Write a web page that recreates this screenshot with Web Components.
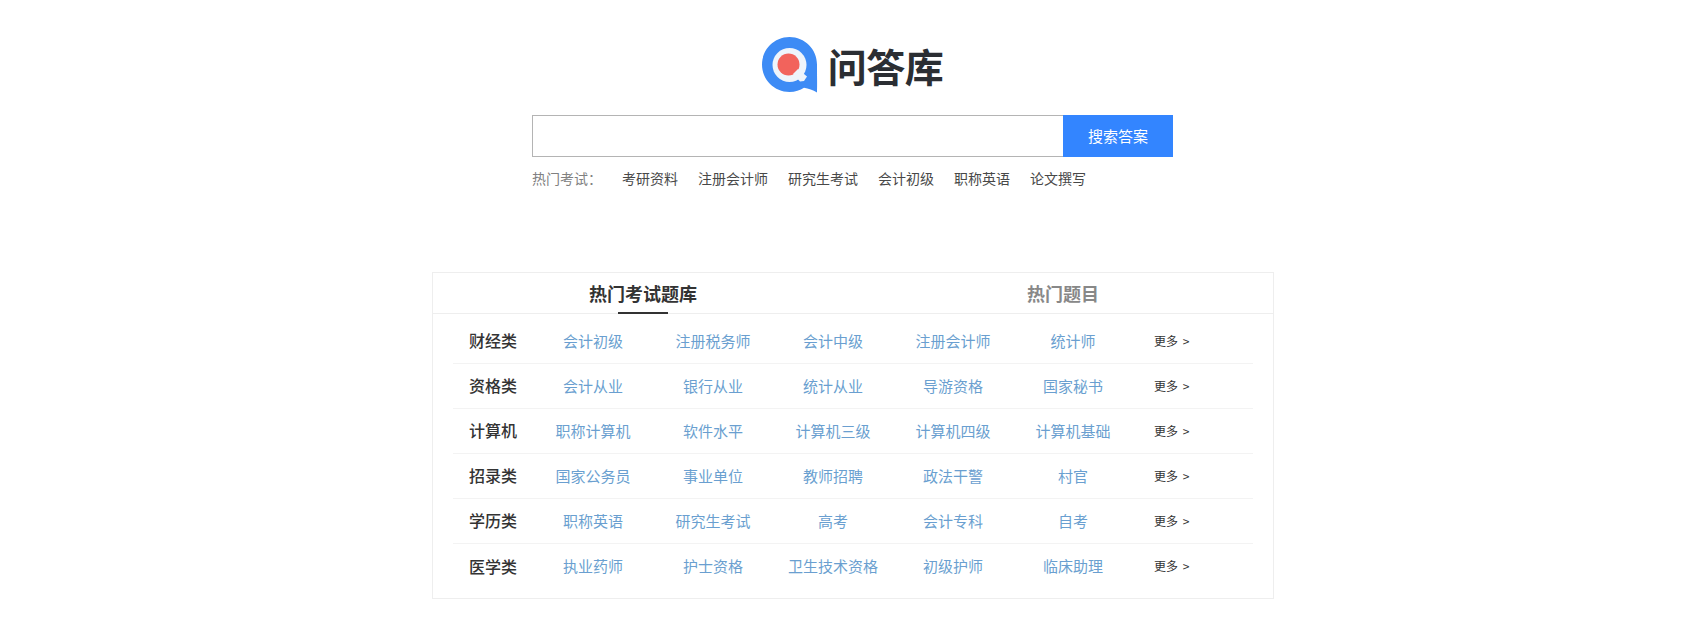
<!DOCTYPE html>
<html lang="zh-CN">
<head>
<meta charset="utf-8">
<title>问答库</title>
<style>
	html, body { margin: 0; background: #fff; }
	body { font-family: "Noto Sans CJK SC", "Liberation Sans", sans-serif; color: #333; }
</style>
</head>
<body>
<qa-page>
	<qa-logo></qa-logo>
	<qa-search></qa-search>
	<qa-hot label="热门考试：" items="考研资料,注册会计师,研究生考试,会计初级,职称英语,论文撰写"></qa-hot>
	<qa-panel first="热门考试题库" second="热门题目">
		<qa-row name="财经类" items="会计初级,注册税务师,会计中级,注册会计师,统计师"></qa-row>
		<qa-row name="资格类" items="会计从业,银行从业,统计从业,导游资格,国家秘书"></qa-row>
		<qa-row name="计算机" items="职称计算机,软件水平,计算机三级,计算机四级,计算机基础"></qa-row>
		<qa-row name="招录类" items="国家公务员,事业单位,教师招聘,政法干警,村官"></qa-row>
		<qa-row name="学历类" items="职称英语,研究生考试,高考,会计专科,自考"></qa-row>
		<qa-row name="医学类" items="执业药师,护士资格,卫生技术资格,初级护师,临床助理" last></qa-row>
	</qa-panel>
</qa-page>
<script>
	// page shell
	class QaPage extends HTMLElement {
		connectedCallback() {
			const shadow = this.attachShadow({mode: 'open'});
			shadow.innerHTML = `
				<style>
					:host {
						display: flex;
						flex-direction: column;
						align-items: center;
						padding: 37px 0 0 18px;
						box-sizing: border-box;
						height: 638px;
						overflow: hidden;
					}
				</style>
				<slot></slot>
			`;
		}
	}

	class QaLogo extends HTMLElement {
		connectedCallback() {
			const shadow = this.attachShadow({mode: 'open'});
			shadow.innerHTML = `
				<style>
					:host {
						display: flex;
						align-items: center;
						gap: 10px;
						height: 56px;
					}
					svg { width: 56px; height: 56px; display: block; }
					.name {
						font-size: 39px;
						font-weight: 700;
						line-height: 56px;
						color: #2b2e33;
						letter-spacing: -0.5px;
					}
				</style>
				<svg viewBox="0 0 56 56">
					<path fill="#3d8bf5" d="M27.5 0C12.3 0 0 12.2 0 27.5S12.3 55 27.5 55c5.800 0 10.500-1.500 14.500-4.200 4.500.6 9 2.200 13 4.700 .3-8 0-15 0-28C55 12.200 42.700 0 27.500 0z"/>
					<circle cx="27.500" cy="28" r="17" fill="#eef4fb"/>
					<circle cx="26.500" cy="27.500" r="11" fill="#f2635c"/>
					<path fill="#eef4fb" d="M31 37l5-5 9 7.500-3 4.500-4 .5z"/>
				</svg>
				<span class="name">问答库</span>
			`;
		}
	}

	class QaSearch extends HTMLElement {
		connectedCallback() {
			const shadow = this.attachShadow({mode: 'open'});
			shadow.innerHTML = `
				<style>
					:host {
						display: flex;
						width: 641px;
						height: 42px;
						margin-top: 22px;
					}
					input {
						flex: 1;
						min-width: 0;
						box-sizing: border-box;
						border: 1px solid #b4b4b4;
						border-right: 0;
						outline: none;
						padding: 0 10px;
						background: #fff;
					}
					button {
						width: 110px;
						border: 0;
						padding: 0 0 2px;
						background: #3385ff;
						color: #fff;
						font: 15px "Noto Sans CJK SC", "Liberation Sans", sans-serif;
					}
				</style>
				<input type="text">
				<button type="button">搜索答案</button>
			`;
		}
	}

	class QaHot extends HTMLElement {
		connectedCallback() {
			const shadow = this.attachShadow({mode: 'open'});
			const items = this.getAttribute('items').split(',')
			shadow.innerHTML = `
				<style>
					:host {
						display: flex;
						width: 641px;
						margin-top: 11px;
						margin-bottom: 1px;
						font-size: 14px;
						line-height: 20px;
						gap: 20px;
					}
					.label { color: #808080; width: 70px; }
					a { color: #484848; text-decoration: none; }
				</style>
				<span class="label">${this.getAttribute('label')}</span>
				${items.map(item => `<a href="#">${item}</a>`).join('')}
			`;
		}
	}

	class QaPanel extends HTMLElement {
		connectedCallback() {
			const shadow = this.attachShadow({mode: 'open'});
			shadow.innerHTML = `
				<style>
					:host {
						display: block;
						box-sizing: border-box;
						width: 842px;
						margin: 83px -1px 0 0;
						border: 1px solid #eeeeee;
					}
					.tabs {
						display: grid;
						grid-template-columns: 1fr 1fr;
						height: 40px;
						border-bottom: 1px solid #eeeeee;
					}
					.tab {
						display: flex;
						justify-content: center;
						position: relative;
						font-size: 18px;
						font-weight: 700;
						line-height: 40px;
						color: #888;
					}
					.tab.active { color: #333; }
					.tab.active::after {
						content: "";
						position: absolute;
						left: 50%;
						bottom: -1px;
						width: 50px;
						height: 2px;
						margin-left: -25px;
						background: #333;
					}
					.rows { padding: 5px 20px 9px 20px; }
				</style>
				<div class="tabs">
					<div class="tab active">${this.getAttribute('first')}</div>
					<div class="tab">${this.getAttribute('second')}</div>
				</div>
				<div class="rows"><slot></slot></div>
			`;
		}
	}

	class QaRow extends HTMLElement {
		connectedCallback() {
			const shadow = this.attachShadow({mode: 'open'});
			const items = this.getAttribute('items').split(',')
			shadow.innerHTML = `
				<style>
					:host {
						display: grid;
						grid-template-columns: 80px repeat(5, 120px) auto;
						align-items: center;
						height: 45px;
						box-sizing: border-box;
						padding-bottom: 2px;
						border-bottom: 1px solid #f3f3f3;
						text-align: center;
					}
					:host([last]) { border-bottom: 0; }
					.name { font-size: 16px; font-weight: 500; color: #333; }
					a { font-size: 15px; color: #6a9fd0; text-decoration: none; }
					.more { font-size: 12px; color: #333; text-align: left; padding-left: 21px; word-spacing: 2px; }
				</style>
				<span class="name">${this.getAttribute('name')}</span>
				${items.map(item => `<a href="#">${item}</a>`).join('')}
				<a class="more" href="#">更多 &gt;</a>
			`;
		}
	}

	customElements.define('qa-page', QaPage);
	customElements.define('qa-logo', QaLogo);
	customElements.define('qa-search', QaSearch);
	customElements.define('qa-hot', QaHot);
	customElements.define('qa-panel', QaPanel);
	customElements.define('qa-row', QaRow);
</script>
</body>
</html>
